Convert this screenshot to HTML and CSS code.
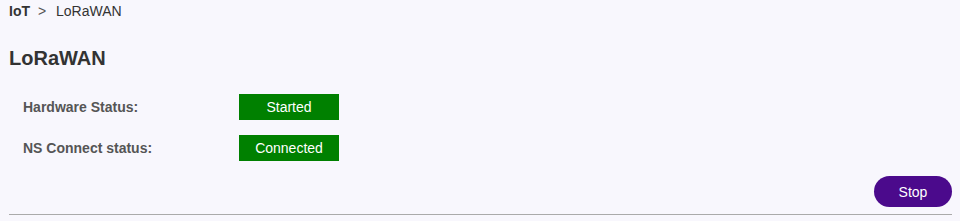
FILE: index.html
```html
<!DOCTYPE html>
<html lang="en">
<head>
  <meta charset="UTF-8" />
  <title>LoRaWAN</title>
  <link rel="stylesheet" href="styles.css">
</head>
<body>
  <div class="crumbs">
    <span class="crumb-root">IoT</span>
    <span class="crumb-sep">&gt;</span>
    <span class="crumb-cur">LoRaWAN</span>
  </div>

  <h1 class="title">LoRaWAN</h1>

  <!-- статусы -->
  <div class="status-list">
    <div class="status-row">
      <div class="status-label">Hardware Status:</div>
      <div class="status-badge">Started</div>
    </div>
    <div class="status-row">
      <div class="status-label">NS Connect status:</div>
      <div class="status-badge">Connected</div>
    </div>
  </div>

  <div class="actions">
    <button class="stop-btn">Stop</button>
  </div>
  <div class="divider"></div>
</body>
</html>
```

FILE: styles.css
```css
body {
  margin: 0;
  padding: 0 8px 0 9px;
  background: #f8f7fd;
  font-family: "Liberation Sans", Arial, sans-serif;
  color: #333;
}

.crumbs {
  font-size: 14px;
  height: 22px;
  line-height: 22px;
  color: #333;
}

.crumb-root {
  font-weight: bold;
}

.crumb-sep {
  margin: 0 6px 0 4px;
  color: #555;
}

.title {
  margin: 25px 0 0;
  font-size: 20px;
  line-height: 23px;
  font-weight: bold;
  color: #333;
}

.status-list {
  margin-top: 24px;
  display: flex;
  flex-direction: column;
  gap: 15px;
  padding-left: 14px;
}

.status-row {
  display: flex;
  align-items: center;
}

.status-label {
  width: 216px;
  font-size: 14px;
  font-weight: bold;
  color: #555;
}

.status-badge {
  width: 100px;
  height: 26px;
  line-height: 26px;
  background: #008000;
  color: #fff;
  text-align: center;
  font-size: 14px;
}

.actions {
  display: flex;
  justify-content: flex-end;
  margin-top: 15px;
}

.stop-btn {
  width: 78px;
  height: 31px;
  border: none;
  border-radius: 16px;
  background: #4b0a8c;
  color: #fff;
  font-family: inherit;
  font-size: 14px;
  cursor: pointer;
}

.divider {
  margin-top: 7px;
  border-top: 1px solid #aaa;
}
```
